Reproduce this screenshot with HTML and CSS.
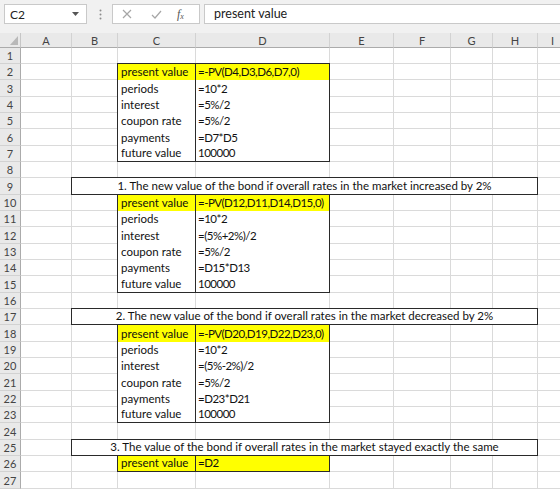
FILE: index.html
```html
<!DOCTYPE html>
<html>
<head>
<meta charset="utf-8">
<title>Bond PV</title>
<link rel="stylesheet" href="styles.css">
</head>
<body>
<div class="app">
  <div class="fbar">
    <div class="namebox"><span class="ref">C2</span><svg class="dd" width="7" height="4" viewBox="0 0 7 4"><path d="M0 0h7L3.5 4z"/></svg></div>
    <svg class="grip" width="3" height="11" viewBox="0 0 3 11"><circle cx="1.5" cy="1.5" r="1"/><circle cx="1.5" cy="5.5" r="1"/><circle cx="1.5" cy="9.5" r="1"/></svg>
    <div class="fbtns">
      <svg class="ic cancel" width="10" height="10" viewBox="0 0 10 10"><path d="M1 1l8 8M9 1l-8 8"/></svg>
      <svg class="ic enter" width="11" height="9" viewBox="0 0 11 9"><path d="M1 5l3 3 6-7"/></svg>
      <span class="fx">f<sub>x</sub></span>
    </div>
    <div class="finput">present value</div>
  </div>

  <div class="sheet">
    <div class="corner"><svg width="8" height="9" viewBox="0 0 8 9"><path d="M8 0v9H0z"/></svg></div>
    <div class="ch">A</div>
    <div class="ch">B</div>
    <div class="ch">C</div>
    <div class="ch">D</div>
    <div class="ch">E</div>
    <div class="ch">F</div>
    <div class="ch">G</div>
    <div class="ch">H</div>
    <div class="ch">I</div>

    <div class="rh">1</div>
    <div class="rh">2</div>
    <div class="rh">3</div>
    <div class="rh">4</div>
    <div class="rh">5</div>
    <div class="rh">6</div>
    <div class="rh">7</div>
    <div class="rh">8</div>
    <div class="rh">9</div>
    <div class="rh">10</div>
    <div class="rh">11</div>
    <div class="rh">12</div>
    <div class="rh">13</div>
    <div class="rh">14</div>
    <div class="rh">15</div>
    <div class="rh">16</div>
    <div class="rh">17</div>
    <div class="rh">18</div>
    <div class="rh">19</div>
    <div class="rh">20</div>
    <div class="rh">21</div>
    <div class="rh">22</div>
    <div class="rh">23</div>
    <div class="rh">24</div>
    <div class="rh">25</div>
    <div class="rh">26</div>
    <div class="rh">27</div>

    <div class="tbl t1">
      <div class="k hl">present value</div><div class="v hl">=-PV(D4,D3,D6,D7,0)</div>
      <div class="k">periods</div><div class="v">=10*2</div>
      <div class="k">interest</div><div class="v">=5%/2</div>
      <div class="k">coupon rate</div><div class="v">=5%/2</div>
      <div class="k">payments</div><div class="v">=D7*D5</div>
      <div class="k">future value</div><div class="v">100000</div>
    </div>

    <div class="title r9">1. The new value of the bond if overall rates in the market increased by 2%</div>

    <div class="tbl t2">
      <div class="k hl">present value</div><div class="v hl">=-PV(D12,D11,D14,D15,0)</div>
      <div class="k">periods</div><div class="v">=10*2</div>
      <div class="k">interest</div><div class="v">=(5%+2%)/2</div>
      <div class="k">coupon rate</div><div class="v">=5%/2</div>
      <div class="k">payments</div><div class="v">=D15*D13</div>
      <div class="k">future value</div><div class="v">100000</div>
    </div>

    <div class="title r17">2. The new value of the bond if overall rates in the market decreased by 2%</div>

    <div class="tbl t3">
      <div class="k hl">present value</div><div class="v hl">=-PV(D20,D19,D22,D23,0)</div>
      <div class="k">periods</div><div class="v">=10*2</div>
      <div class="k">interest</div><div class="v">=(5%-2%)/2</div>
      <div class="k">coupon rate</div><div class="v">=5%/2</div>
      <div class="k">payments</div><div class="v">=D23*D21</div>
      <div class="k">future value</div><div class="v">100000</div>
    </div>

    <div class="title r25">3. The value of the bond if overall rates in the market stayed exactly the same</div>

    <div class="tbl t4">
      <div class="k hl">present value</div><div class="v hl">=D2</div>
    </div>
  </div>
</div>
</body>
</html>
```

FILE: styles.css
```css
* { box-sizing: border-box; }
html, body { margin: 0; padding: 0; }
body {
  width: 560px;
  height: 489px;
  overflow: hidden;
  background: #fff;
  font-family: Lato, "Open Sans", sans-serif;
}
.app {
  width: 560px;
  height: 489px;
  overflow: hidden;
  background: #f1f1f1;
}

/* formula bar */
.fbar {
  height: 33px;
  display: flex;
  align-items: flex-start;
  padding: 4px 0 0 4px;
}
.namebox {
  width: 83px;
  height: 20px;
  background: #fff;
  border: 1px solid #c9c9c9;
  display: flex;
  align-items: center;
  justify-content: space-between;
  padding: 0 7px 0 5px;
  font-size: 12px;
  color: #222;
}
.dd { fill: #555; }
.grip { margin: 5px 0 0 12px; fill: #8c8c8c; }
.fbtns {
  margin-left: 10px;
  width: 88px;
  height: 20px;
  background: #fff;
  border: 1px solid #c9c9c9;
  display: flex;
  align-items: center;
  padding-left: 9px;
}
.ic { fill: none; stroke: #a6a6a6; stroke-width: 1.2; }
.enter { margin-left: 19px; }
.fx {
  margin-left: 15px;
  font-family: "Liberation Serif", serif;
  font-style: italic;
  font-size: 12px;
  color: #555;
}
.fx sub { font-size: 8px; vertical-align: -1px; }
.finput {
  margin-left: 4px;
  flex: 1;
  height: 20px;
  background: #fff;
  border: 1px solid #c9c9c9;
  border-right: 0;
  padding-left: 9px;
  font-size: 12.5px;
  line-height: 18px;
  color: #222;
}

/* sheet */
.sheet {
  display: grid;
  grid-template-columns: 21px 51px 46px 78px 134px 64px 57px 42px 45px 30px;
  grid-template-rows: 15px repeat(9, 16px 16px 17px);
  background-color: #fff;
  background-image:
    linear-gradient(90deg,
      transparent 71px, #dadada 71px 72px,
      transparent 72px 117px, #dadada 117px 118px,
      transparent 118px 195px, #dadada 195px 196px,
      transparent 196px 329px, #dadada 329px 330px,
      transparent 330px 393px, #dadada 393px 394px,
      transparent 394px 450px, #dadada 450px 451px,
      transparent 451px 492px, #dadada 492px 493px,
      transparent 493px 537px, #dadada 537px 538px,
      transparent 538px),
    repeating-linear-gradient(180deg,
      transparent 0 15px, #dadada 15px 16px,
      transparent 16px 31px, #dadada 31px 32px,
      transparent 32px 48px, #dadada 48px 49px);
  background-position: 0 0, 0 15px;
  width: 567px;
}
.corner {
  background: #e9e9e9;
  border-right: 1px solid #c6c6c6;
  border-bottom: 1px solid #ababab;
  display: flex;
  align-items: flex-end;
  justify-content: flex-end;
  padding: 0 2px 2px 0;
  fill: #b9b9b9;
}
.ch {
  background: #e9e9e9;
  border-right: 1px solid #d2d2d2;
  border-bottom: 1px solid #ababab;
  font-size: 11px;
  color: #444;
  display: flex;
  align-items: center;
  justify-content: center;
}
.rh {
  grid-column: 1;
  background: #e9e9e9;
  border-right: 1px solid #ababab;
  border-bottom: 1px solid #d2d2d2;
  font-size: 11px;
  color: #444;
  display: flex;
  align-items: center;
  justify-content: center;
}

/* bordered blocks */
.tbl, .title {
  margin: -1px 0 0 -1px;
  border: 1px solid #2a2a2a;
  background: #fff;
  font-size: 11.5px;
  color: #111;
}
.tbl {
  grid-column: 4 / 6;
  display: grid;
  grid-template-columns: 78px 1fr;
}
.tbl > div {
  display: flex;
  align-items: flex-end;
  padding: 0 0 1px 3px;
  line-height: 14px;
  white-space: nowrap;
  overflow: hidden;
}
.tbl .k { border-right: 1px solid #2a2a2a; }
.tbl .v { letter-spacing: -0.5px; padding-left: 2px; }
.tbl .hl { background: #ffff00; }

.t1 { grid-row: 3 / 9; grid-template-rows: 16px 17px 16px 16px 17px 1fr; }
.t2 { grid-row: 11 / 17; grid-template-rows: 16px 16px 17px 16px 16px 1fr; }
.t3 { grid-row: 19 / 25; grid-template-rows: 17px 16px 16px 17px 16px 1fr; }
.t4 { grid-row: 27 / 28; grid-template-rows: 1fr; }

.title {
  grid-column: 3 / 10;
  display: flex;
  align-items: flex-end;
  justify-content: center;
  padding-bottom: 1px;
  line-height: 14px;
  white-space: nowrap;
}
.r9 { grid-row: 10; }
.r17 { grid-row: 18; }
.r25 { grid-row: 26; }
```
